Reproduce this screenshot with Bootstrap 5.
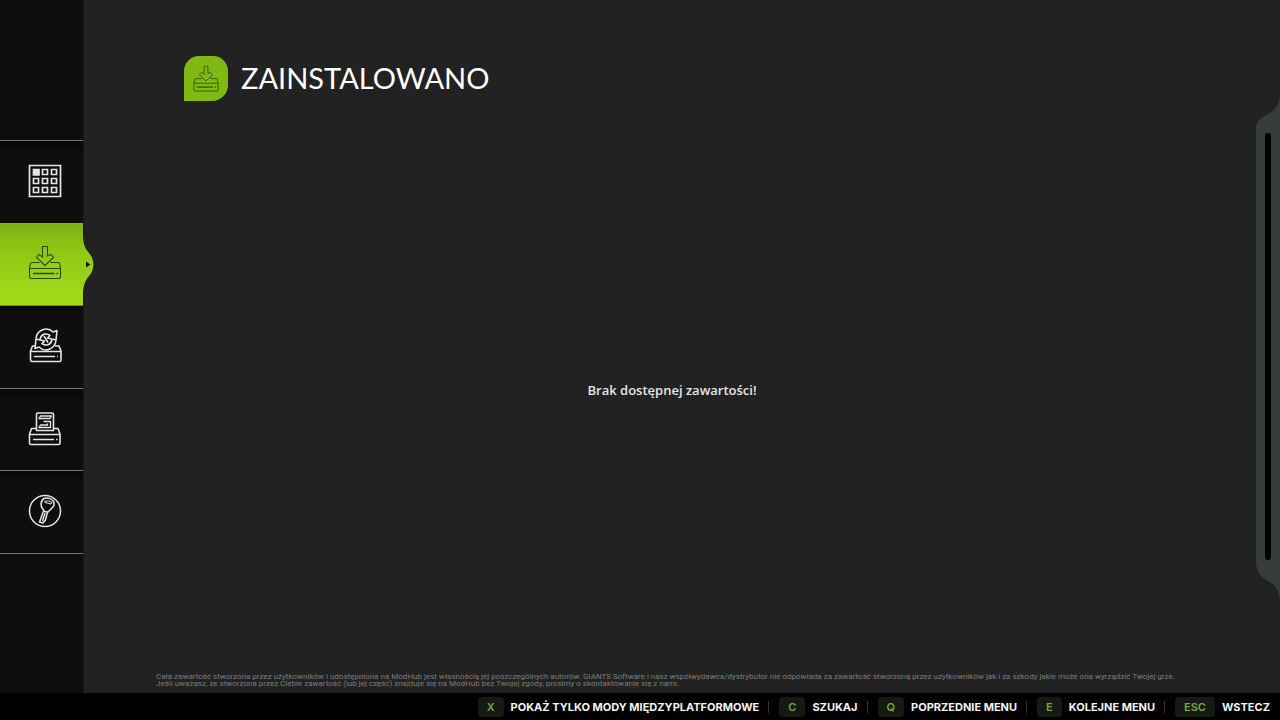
<!DOCTYPE html>
<html lang="pl" data-bs-theme="dark">
<head>
<meta charset="utf-8">
<meta name="viewport" content="width=device-width, initial-scale=1">
<title>ModHub – Zainstalowano</title>
<link href="https://cdn.jsdelivr.net/npm/bootstrap@5.3.0/dist/css/bootstrap.min.css" rel="stylesheet">
<style>
  body { background: #222; color: #f1f1ee; font-family: "Open Sans", sans-serif; font-size: 13px; }
  .side { flex: 0 0 83px; background: #0c0c0c; padding-top: 140px; box-shadow: 1px 0 1px #191919; }
  .side-menu { height: 414px; border-bottom: 1px solid #777; }
  .side-link { border-top: 1px solid #777; color: #e4e6df; padding: 0 0 2px 6px; }
  .side-link:not(.active) { background: linear-gradient(#080808, #0e0e0e 12px); }
  .side-link.active { background: linear-gradient(#7cb013, #8cc414 25%, #a2d91b 90%); border-color: #8aa94a; color: #294a08; }
  .side-link svg { width: 36px; height: 36px; }
  .bump { left: 100%; top: 0; }
  .side-link .bump svg { width: 11px; height: 80px; }
  .page-head { padding: 56px 0 0 101px; gap: 13px; }
  .page-icon { width: 44px; height: 45px; background: #80b911; border-radius: 15px 15px 16px 0; color: #315108; }
  .page-icon svg { width: 28px; height: 28px; }
  .page-title { font: 400 29px/36px Lato, sans-serif; padding-bottom: 2px; }
  .message { font-weight: 600; color: #e6e6e3; }
  .empty-area { padding: 8px 0 0 5px; }
  .legal { font: 400 8px/7px Roboto, sans-serif; color: #7c7c7c; padding: 0 72px 6px 73px; }
  .scroll-rail { flex: 0 0 24px; padding: 95px 0 93px; color: #363c37; }
  .rail-body { background: currentColor; }
  .rail-thumb { width: 6px; border-radius: 3px; background: #000; }
  .help-bar { background: #000; padding: 4px 10px 3px; font: 700 11px/20px Inter, sans-serif; }
  .help-item { gap: 7px; color: #f4f4f4; font: inherit; }
  .help-item + .help-item::before { content: ""; width: 1px; height: 12px; background: #343434; margin: 0 3px 0 9px; }
  .help-key { background: #151b13; color: #76a63b; border-radius: 4px; padding: 0 9px; font: 600 11px/20px Inter, sans-serif; }
</style>
</head>
<body class="d-flex flex-column min-vh-100">
<svg class="d-none" aria-hidden="true">
  <symbol id="i-download" viewBox="0 0 36 36">
    <path d="M15.500 1.500H20.500V11L24 9.500L26.500 12.500L18 20.500L9.500 12.500L12 9.500L15.500 12Z"/>
    <path d="M12.500 17.500H4.500Q3.500 17.500 3.500 18.500L2.500 23V31.500Q2.500 33.500 4 33.500H32Q33.500 33.500 33.500 31.500V23L32.500 18.500Q32.500 17.500 31.500 17.500H23.500M2.500 23.500H33.500"/>
    <path d="M6 28.500H27.500M29.500 28.500H31" stroke-width="1.500"/>
  </symbol>
</svg>
<div class="d-flex flex-grow-1">
  <nav class="side" aria-label="ModHub">
    <div class="side-menu d-flex flex-column">
      <a class="side-link d-flex flex-fill align-items-center justify-content-center" href="#" aria-label="Kategorie">
        <svg viewBox="0 0 36 36" fill="none" stroke="currentColor" stroke-width="1.700" aria-hidden="true">
          <path d="M2.500 2.500H33.500V33.500H2.500Z"/>
          <path fill="currentColor" d="M6.500 6.500H12V12H6.500Z"/>
          <path d="M15.500 6.500H20.500V11.500H15.500ZM24.500 6.500H29.500V11.500H24.500ZM6.500 15.500H11.500V20.500H6.500ZM15.500 15.500H20.500V20.500H15.500ZM24.500 15.500H29.500V20.500H24.500ZM6.500 24.500H11.500V29.500H6.500ZM15.500 24.500H20.500V29.500H15.500ZM24.500 24.500H29.500V29.500H24.500Z"/>
        </svg>
      </a>
      <a class="side-link active position-relative d-flex flex-fill align-items-center justify-content-center" href="#" aria-current="page" aria-label="Zainstalowano">
        <svg fill="none" stroke="currentColor" stroke-width="1.100" aria-hidden="true"><use href="#i-download"/></svg>
        <span class="bump position-absolute d-flex">
          <svg viewBox="0 0 11 82" preserveAspectRatio="none" aria-hidden="true">
            <defs><linearGradient id="g" x1="0" y1="0" x2="0" y2="82" gradientUnits="userSpaceOnUse"><stop stop-color="#7cb013"/><stop offset=".25" stop-color="#8cc414"/><stop offset=".9" stop-color="#a2d91b"/></linearGradient></defs>
            <path fill="url(#g)" d="M0 10C0 23 3 26 7 31C11.500 37 11.500 46 7 52C3 57 0 61 0 73Z"/>
            <path fill="#101807" d="M3 38.500L7.500 41.500L3 44.500Z"/>
          </svg>
        </span>
      </a>
      <a class="side-link d-flex flex-fill align-items-center justify-content-center" href="#" aria-label="Aktualizacje">
        <svg viewBox="0 0 36 36" fill="none" stroke="currentColor" stroke-width="1.600" stroke-linejoin="round" aria-hidden="true">
          <path d="M8 18H5.500L3.500 23V31.500Q3.500 33.500 5 33.500H32.500Q34 33.500 34 32V23L32 18H28M3.500 23.500H34"/>
          <path d="M7 28.500H28M30 28.500H31"/>
          <path d="M9 10.500C10 2 20 -2 26 4L30 2.500L29 12L20.500 10L23 7.500C19 4.500 14 6 13 11.500"/>
          <path d="M29 12.500C28 21 18 25 12 19L8 20.500L9 11L17.500 13L15 15.500C19 18.500 24 17 25 11.500M17 8L21 14.500"/>
        </svg>
      </a>
      <a class="side-link d-flex flex-fill align-items-center justify-content-center" href="#" aria-label="Zawartość dodatkowa">
        <svg viewBox="0 0 36 36" fill="none" stroke="currentColor" stroke-width="1.600" stroke-linejoin="round" aria-hidden="true">
          <path d="M9.500 17.500H4.500L2.500 23V32Q2.500 33.500 4 33.500H31.500Q33 33.500 33 32V23L31 17.500H26.500M2.500 23.500H33"/>
          <path d="M6 28.500H27M29 28.500H30.500"/>
          <path d="M9.500 19.500V3.500Q9.500 2 11 2H25Q26.500 2 26.500 3.500V19.500Z"/>
          <path d="M12 7.500L13.500 5H24.500L23 7.500ZM16.500 10.500H23.500V16.500H12L13.500 14H20.500V12.500" stroke-width="1.300"/>
        </svg>
      </a>
      <a class="side-link d-flex flex-fill align-items-center justify-content-center" href="#" aria-label="Klucz produktu">
        <svg viewBox="0 0 36 36" fill="none" stroke="currentColor" stroke-width="1.500" stroke-linejoin="round" aria-hidden="true">
          <circle cx="18" cy="18" r="15.500"/>
          <path d="M17 5.500Q22 4 26 7.500Q28.500 11.500 25.500 14.500L21 19L17.500 18.500L14.500 14Q13 8 17 5.500Z"/>
          <path d="M17.500 8.500Q21 6.500 25 9.500L24 11L18 9.500Z" stroke-width="1"/>
          <path d="M16.500 18L12.500 29L16 30L18.500 27L20.500 19M18 20L15.500 28"/>
        </svg>
      </a>
    </div>
  </nav>
  <main class="d-flex flex-column flex-grow-1">
    <header class="page-head d-flex align-items-center">
      <span class="page-icon d-flex align-items-center justify-content-center">
        <svg fill="none" stroke="currentColor" stroke-width="1.100" aria-hidden="true"><use href="#i-download"/></svg>
      </span>
      <h1 class="page-title m-0">ZAINSTALOWANO</h1>
    </header>
    <div class="empty-area flex-grow-1 d-flex align-items-center justify-content-center text-center">
      <p class="message m-0">Brak dostępnej zawartości!</p>
    </div>
    <footer class="legal">
      <p class="m-0">Cała zawartość stworzona przez użytkowników i udostępniona na ModHub jest własnością jej poszczególnych autorów. GIANTS Software i nasz współwydawca/dystrybutor nie odpowiada za zawartość stworzoną przez użytkowników jak i za szkody jakie może ona wyrządzić Twojej grze.</p>
      <p class="m-0">Jeśli uważasz, że stworzona przez Ciebie zawartość (lub jej część) znajduje się na ModHub bez Twojej zgody, prosimy o skontaktowanie się z nami.</p>
    </footer>
  </main>
  <div class="scroll-rail d-flex flex-column" aria-hidden="true">
    <svg class="d-block" width="24" height="34" viewBox="0 0 24 34"><path fill="currentColor" d="M24 0C23 12 18 16 10 20C3 24 0 28 0 34H24Z"/></svg>
    <div class="rail-body flex-grow-1 d-flex justify-content-center pt-1"><div class="rail-thumb"></div></div>
    <svg class="d-block" width="24" height="40" viewBox="0 0 24 40"><path fill="currentColor" d="M0 0C0 12 4 17 12 21C19 25 23 30 24 40V0Z"/></svg>
  </div>
</div>
<div class="help-bar d-flex flex-wrap justify-content-end" role="toolbar" aria-label="Skróty">
  <button type="button" class="help-item d-flex align-items-center border-0 bg-transparent p-0"><kbd class="help-key">X</kbd>POKAŻ TYLKO MODY MIĘDZYPLATFORMOWE</button>
  <button type="button" class="help-item d-flex align-items-center border-0 bg-transparent p-0"><kbd class="help-key">C</kbd>SZUKAJ</button>
  <button type="button" class="help-item d-flex align-items-center border-0 bg-transparent p-0"><kbd class="help-key">Q</kbd>POPRZEDNIE MENU</button>
  <button type="button" class="help-item d-flex align-items-center border-0 bg-transparent p-0"><kbd class="help-key">E</kbd>KOLEJNE MENU</button>
  <button type="button" class="help-item d-flex align-items-center border-0 bg-transparent p-0"><kbd class="help-key">ESC</kbd>WSTECZ</button>
</div>
<script src="https://cdn.jsdelivr.net/npm/bootstrap@5.3.0/dist/js/bootstrap.bundle.min.js"></script>
</body>
</html>
